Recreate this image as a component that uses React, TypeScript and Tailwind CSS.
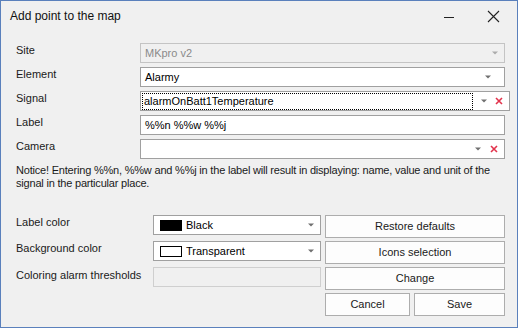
import React from 'react';

const font = { fontFamily: '"Liberation Sans", Arial, sans-serif' };

const Arrow = ({ muted }: { muted?: boolean }) => (
  <svg width="6" height="4" viewBox="0 0 6 4" className="shrink-0">
    <path d="M0 0.5h6L3 3.5z" fill={muted ? '#ababab' : '#707070'} />
  </svg>
);

const RedX = () => (
  <svg width="8" height="8" viewBox="0 0 8 8" className="shrink-0">
    <path d="M1 1l6 6M7 1L1 7" stroke="#e2334c" strokeWidth="1.6" />
  </svg>
);

interface FieldProps {
  label: string;
  children: React.ReactNode;
}

const Field = ({ label, children }: FieldProps) => (
  <div className="flex h-[20px]">
    <div className="w-[124px] shrink-0 text-[11px] leading-[13px] pt-[1px] text-[#1a1a1a]">{label}</div>
    <div className="flex-1">{children}</div>
  </div>
);

const Swatch = ({ fill }: { fill: string }) => (
  <span className={`inline-block w-[22px] h-[11px] border border-black shrink-0 ${fill}`} />
);

const Btn = ({ children, className = '' }: { children: React.ReactNode; className?: string }) => (
  <button className={`h-[23px] border border-[#adadad] bg-[#fdfdfd] text-[11px] text-[#1a1a1a] flex items-center justify-center ${className}`}>
    {children}
  </button>
);

export default function App() {
  return (
    <div style={font} className="w-[518px] h-[328px] border border-[#5a80bc] bg-[#f0f0f0] flex flex-col overflow-hidden">
      {/* barra de titulo */}
      <div className="h-[30px] flex items-center pl-[9px] shrink-0">
        <span className="text-[12px] text-[#111]">Add point to the map</span>
        <div className="ml-auto flex items-center">
          <svg width="46" height="30" viewBox="0 0 46 30">
            <path d="M20 16.5h10" stroke="#222" strokeWidth="1" />
          </svg>
          <svg width="46" height="30" viewBox="0 0 46 30" className="mr-[1px]">
            <path d="M18 10l11 11M29 10L18 21" stroke="#222" strokeWidth="1.1" />
          </svg>
        </div>
      </div>

      <div className="flex flex-col pt-[12px] pl-[15px] pr-[12px] gap-[4px]">
        <Field label="Site">
          <div className="h-[20px] border border-[#c4c4c4] bg-[#f0f0f0] flex items-center pl-[4px] pr-[6px]">
            <span className="flex-1 text-[11px] text-[#8a8a8a]">MKpro v2</span>
            <Arrow muted />
          </div>
        </Field>
        <Field label="Element">
          <div className="h-[20px] border border-[#a0a0a0] bg-white flex items-center pl-[4px] pr-[13px]">
            <span className="flex-1 text-[11px] text-black">Alarmy</span>
            <Arrow />
          </div>
        </Field>
        <Field label="Signal">
          <div className="h-[20px] border border-[#a0a0a0] bg-white flex items-center pl-[1px] pr-[6px]">
            <span className="w-[331px] h-[17px] border border-dotted border-black text-[11px] text-black flex items-center pl-[1px]">
              alarmOnBatt1Temperature
            </span>
            <span className="ml-[8px]"><Arrow /></span>
            <span className="ml-[8px]"><RedX /></span>
          </div>
        </Field>
        <Field label="Label">
          <div className="h-[20px] border border-[#a0a0a0] bg-white flex items-center pl-[4px]">
            <span className="text-[11px] text-black">%%n %%w %%j</span>
          </div>
        </Field>
        <Field label="Camera">
          <div className="h-[20px] border border-[#a0a0a0] bg-white flex items-center justify-end pr-[6px] gap-[9px]">
            <Arrow />
            <RedX />
          </div>
        </Field>

        <p className="mt-[1px] text-[11px] leading-[13px] tracking-[-0.2px] text-[#1a1a1a]">
          Notice! Entering %%n, %%w and %%j in the label will result in displaying: name, value and unit of the signal in the particular place.
        </p>
      </div>

      <div className="flex flex-col pl-[15px] pr-[12px] mt-[25px] gap-[3px]">
        <div className="flex h-[23px]">
          <div className="w-[137px] text-[11px] leading-[13px] pt-[1px] text-[#1a1a1a]">Label color</div>
          <div className="w-[168px] h-[20px] border border-[#a0a0a0] bg-white flex items-center pl-[6px] pr-[6px] gap-[4px]">
            <Swatch fill="bg-black" />
            <span className="flex-1 text-[11px] text-black">Black</span>
            <Arrow />
          </div>
          <Btn className="ml-[4px] flex-1">Restore defaults</Btn>
        </div>
        <div className="flex h-[23px]">
          <div className="w-[137px] text-[11px] leading-[13px] pt-[1px] text-[#1a1a1a]">Background color</div>
          <div className="w-[168px] h-[20px] border border-[#a0a0a0] bg-white flex items-center pl-[6px] pr-[6px] gap-[4px]">
            <Swatch fill="bg-white" />
            <span className="flex-1 text-[11px] text-black">Transparent</span>
            <Arrow />
          </div>
          <Btn className="ml-[4px] flex-1">Icons selection</Btn>
        </div>
        <div className="flex h-[23px]">
          <div className="w-[137px] text-[11px] leading-[13px] pt-[2px] text-[#1a1a1a]">Coloring alarm thresholds</div>
          <div className="w-[168px] h-[20px] border border-[#cfcfcf] bg-[#f0f0f0]" />
          <Btn className="ml-[4px] flex-1">Change</Btn>
        </div>
        <div className="flex h-[23px]">
          <div className="w-[309px]" />
          <Btn className="w-[85px]">Cancel</Btn>
          <Btn className="ml-[4px] flex-1">Save</Btn>
        </div>
      </div>
    </div>
  );
}
